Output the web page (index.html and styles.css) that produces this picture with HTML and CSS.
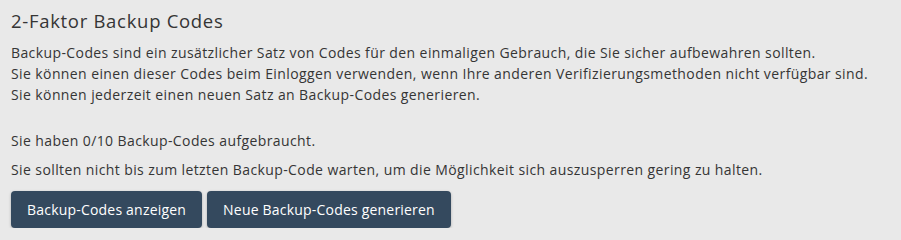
FILE: index.html
```html
<!DOCTYPE html>
<html lang="de">
<head>
<meta charset="utf-8">
<title>2-Faktor Backup Codes</title>
<link rel="stylesheet" href="styles.css">
</head>
<body>
<section class="panel">
  <h2 class="title">2-Faktor Backup Codes</h2>
  <p class="intro">Backup-Codes sind ein zusätzlicher Satz von Codes für den einmaligen Gebrauch, die Sie sicher aufbewahren sollten.<br>Sie können einen dieser Codes beim Einloggen verwenden, wenn Ihre anderen Verifizierungsmethoden nicht verfügbar sind.<br>Sie können jederzeit einen neuen Satz an Backup-Codes generieren.</p>
  <p class="status">Sie haben 0/10 Backup-Codes aufgebraucht.</p>
  <p class="hint">Sie sollten nicht bis zum letzten Backup-Code warten, um die Möglichkeit sich auszusperren gering zu halten.</p>
  <div class="actions">
    <button class="btn" type="button">Backup-Codes anzeigen</button>
    <button class="btn" type="button">Neue Backup-Codes generieren</button>
  </div>
</section>
</body>
</html>
```
FILE: styles.css
```css
html, body {
  margin: 0;
  padding: 0;
  background: #e9e9e9;
}
body {
  font-family: "Open Sans", "DejaVu Sans", sans-serif;
  color: #353535;
}
.panel {
  padding: 9px 11px 0 11px;
}
.title {
  margin: 0;
  font-size: 18.5px;
  font-weight: 400;
  line-height: 24px;
  letter-spacing: 0.7px;
}
.intro, .status, .hint {
  font-size: 14px;
  line-height: 21px;
  margin: 0;
  letter-spacing: 0.4px;
}
.intro {
  margin-top: 9px;
}
.status {
  margin-top: 25px;
}
.hint {
  margin-top: 8px;
}
.actions {
  display: flex;
  gap: 5px;
  margin-top: 11px;
}
.btn {
  font-family: inherit;
  font-size: 14px;
  letter-spacing: 0.2px;
  color: #ffffff;
  background: #34495e;
  border: none;
  border-radius: 4px;
  padding: 0 16px;
  height: 37px;
  box-shadow: 0 1px 3px rgba(0,0,0,0.25);
}
```
